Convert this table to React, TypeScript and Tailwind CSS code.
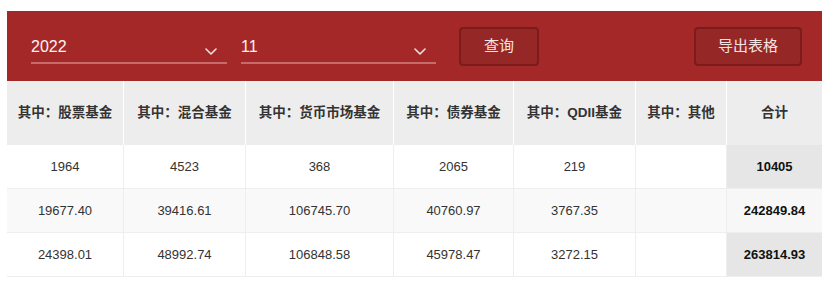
import React from "react";

const headers = ["其中：股票基金", "其中：混合基金", "其中：货币市场基金", "其中：债券基金", "其中：QDII基金", "其中：其他", "合计"];
const widths = ["w-[117px]", "w-[122px]", "w-[148px]", "w-[120px]", "w-[122px]", "w-[91px]", "w-[95px]"];
const rows = [
  ["1964", "4523", "368", "2065", "219", "", "10405"],
  ["19677.40", "39416.61", "106745.70", "40760.97", "3767.35", "", "242849.84"],
  ["24398.01", "48992.74", "106848.58", "45978.47", "3272.15", "", "263814.93"],
];

function Chevron() {
  return (
    <svg width="12" height="7" viewBox="0 0 12 7" fill="none" className="mt-[21px]">
      <path d="M1 1l5 5 5-5" stroke="#f3dede" strokeWidth="1.6" strokeLinecap="round" strokeLinejoin="round" />
    </svg>
  );
}

function Select({ value, w }: { value: string; w: string }) {
  return (
    <div className={`${w} h-[37px] flex items-start justify-between border-b-[2px] border-[#c76a6a] pr-[10px]`}>
      <span className="text-[16px] leading-[20px] text-[#fbf3f3] mt-[10px]">{value}</span>
      <Chevron />
    </div>
  );
}

export default function App() {
  return (
    <div className="pl-[7px] pt-[11px] font-['Liberation_Sans','Noto_Sans_CJK_SC',sans-serif]">
      <div className="w-[815px]">
        <div className="h-[70px] bg-[#a52828] flex items-start pl-[24px] pr-[20px] pt-[16px]">
          <Select value="2022" w="w-[196px]" />
          <div className="w-[14px]" />
          <Select value="11" w="w-[195px]" />
          <button className="ml-[23px] w-[80px] h-[39px] rounded-[4px] bg-[#952727] border-[2px] border-[#7c1b1b] text-[#f6e4e4] text-[15px]">
            查询
          </button>
          <div className="flex-1" />
          <button className="w-[108px] h-[39px] rounded-[4px] bg-[#952727] border-[2px] border-[#7c1b1b] text-[#f6e4e4] text-[15px]">
            导出表格
          </button>
        </div>
        <div className="flex bg-[#ededed] h-[64px]">
          {headers.map((h, i) => (
            <div
              key={i}
              className={`${widths[i]} flex items-center justify-center text-[13.5px] font-bold text-[#333333] ${i < 6 ? "border-r border-white" : ""}`}
            >
              {h}
            </div>
          ))}
        </div>
        {rows.map((r, ri) => (
          <div key={ri} className={`flex h-[44px] border-b border-[#eeeeee] ${ri === 1 ? "bg-[#f9f9f9]" : "bg-white"}`}>
            {r.map((c, ci) => (
              <div
                key={ci}
                className={`${widths[ci]} flex items-center justify-center text-[13px] ${
                  ci === 6
                    ? `font-bold text-[#111111] ${ri === 1 ? "bg-[#f7f7f7]" : "bg-[#e6e6e6]"}`
                    : "text-[#333333] border-r border-[#eeeeee]"
                }`}
              >
                {c}
              </div>
            ))}
          </div>
        ))}
      </div>
    </div>
  );
}
